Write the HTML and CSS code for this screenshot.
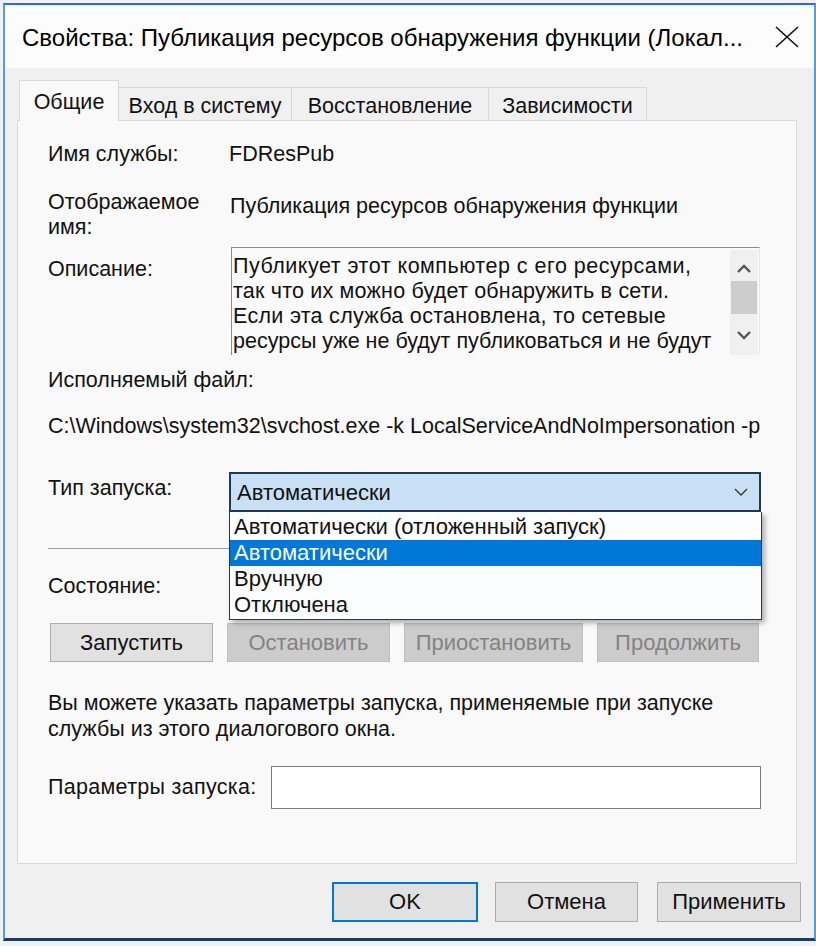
FILE: index.html
```html
<!DOCTYPE html>
<html lang="ru">
<head>
<meta charset="utf-8">
<title>Свойства</title>
<link rel="stylesheet" href="styles.css">
</head>
<body>
<div class="window">
  <div class="titlebar">
    <span class="title">Свойства: Публикация ресурсов обнаружения функции (Локал...</span>
    <svg class="close" width="24" height="22" viewBox="0 0 24 22"><path d="M1 1 L23 21 M23 1 L1 21" stroke="#111" stroke-width="1.6" fill="none"/></svg>
  </div>
  <div class="body">
    <div class="tabs">
      <div class="tab active">Общие</div>
      <div class="tab t2">Вход в систему</div>
      <div class="tab t3">Восстановление</div>
      <div class="tab t4">Зависимости</div>
    </div>
    <div class="panel">
      <div class="row r1">
        <div class="label">Имя службы:</div>
        <div class="value">FDResPub</div>
      </div>
      <div class="row r2">
        <div class="label">Отображаемое<br>имя:</div>
        <div class="value dn">Публикация ресурсов обнаружения функции</div>
      </div>
      <div class="row r3">
        <div class="label ld">Описание:</div>
        <div class="desc">
          <div class="desc-text">
            <div class="dl l1">Публикует этот компьютер с его ресурсами,</div>
            <div class="dl l2">так что их можно будет обнаружить в сети.</div>
            <div class="dl l3">Если эта служба остановлена, то сетевые</div>
            <div class="dl l4">ресурсы уже не будут публиковаться и не будут</div>
          </div>
          <div class="scroll">
            <svg class="sarrow" width="16" height="10" viewBox="0 0 16 10"><path d="M2 8 L8 2 L14 8" stroke="#555" stroke-width="2.4" fill="none"/></svg>
            <div class="thumb"></div>
            <svg class="sarrow down" width="16" height="10" viewBox="0 0 16 10"><path d="M2 2 L8 8 L14 2" stroke="#555" stroke-width="2.4" fill="none"/></svg>
          </div>
        </div>
      </div>
      <div class="line r4">Исполняемый файл:</div>
      <div class="line r5">C:\Windows\system32\svchost.exe -k LocalServiceAndNoImpersonation -p</div>
      <div class="row r6">
        <div class="label lt">Тип запуска:</div>
        <div class="combo">
          <span>Автоматически</span>
          <svg width="14" height="8" viewBox="0 0 14 8"><path d="M1 1 L7 7 L13 1" stroke="#333" stroke-width="1.3" fill="none"/></svg>
        </div>
        <div class="dropdown">
          <div class="item">Автоматически (отложенный запуск)</div>
          <div class="item sel">Автоматически</div>
          <div class="item">Вручную</div>
          <div class="item">Отключена</div>
        </div>
      </div>
      <div class="sep"></div>
      <div class="line r7">Состояние:</div>
      <div class="btnrow">
        <div class="btn b1">Запустить</div>
        <div class="btn dis b2">Остановить</div>
        <div class="btn dis b3">Приостановить</div>
        <div class="btn dis b4">Продолжить</div>
      </div>
      <div class="note">Вы можете указать параметры запуска, применяемые при запуске<br>службы из этого диалогового окна.</div>
      <div class="row params">
        <div class="plabel">Параметры запуска:</div>
        <div class="input"></div>
      </div>
    </div>
    <div class="footer">
      <div class="btn fb ok">OK</div>
      <div class="btn fb cancel">Отмена</div>
      <div class="btn fb apply">Применить</div>
    </div>
  </div>
</div>
</body>
</html>
```
FILE: styles.css
```css
html, body {
  margin: 0;
  padding: 0;
  background: #eef2f6;
}
body {
  font-family: "Liberation Sans", Arial, sans-serif;
  font-size: 21.5px;
  color: #111;
  width: 816px;
  height: 946px;
  overflow: hidden;
}
.window {
  margin: 3px 0 0 3px;
  width: 809px;
  border-top: 2px solid #2a73c0;
  border-left: 2px solid #5e9bd6;
  border-right: 2px solid #5e9bd6;
  border-bottom: 3px solid #1e3c60;
  background: #f0f0f0;
}
.titlebar {
  height: 63px;
  background: #fcfcfc;
  display: flex;
  align-items: center;
  justify-content: space-between;
  padding: 0 17px 0 17px;
}
.title {
  font-size: 24px;
  color: #000;
  white-space: nowrap;
  margin-top: 2px;
}
.close {
  margin-top: 0;
  margin-right: -2px;
}
.body {
  padding: 12px 15px 16px 12px;
}
.tabs {
  display: flex;
  align-items: flex-end;
  height: 41px;
  margin-bottom: -1px;
  padding-left: 2px;
  position: relative;
  z-index: 1;
}
.tab {
  height: 32px;
  margin-bottom: 1px;
  border: 1px solid #d9d9d9;
  border-bottom: none;
  background: #f0f0f0;
  line-height: 36px;
  margin-left: -1px;
  white-space: nowrap;
  text-align: center;
  box-sizing: content-box;
}
.tab.active {
  width: 98px;
  height: 40px;
  margin-bottom: 0;
  margin-left: 0;
  background: #f9f9f9;
  line-height: 42px;
}
.t2 { width: 172px; }
.t3 { width: 196px; }
.t4 { width: 157px; }
.panel {
  height: 721px;
  border: 1px solid #d9d9d9;
  background: #f9f9f9;
  padding: 21px 0 0 30px;
  width: 748px;
}
.row {
  display: flex;
  align-items: flex-start;
}
.label {
  width: 181px;
  line-height: 25px;
  flex: none;
}
.value {
  line-height: 25px;
  white-space: nowrap;
}
.r2 { margin-top: 23px; }
.value.dn { padding-top: 4px; padding-left: 1px; }
.r3 { margin-top: 7px; }
.label.ld { padding-top: 10px; }
.desc {
  width: 529px;
  height: 108px;
  box-sizing: border-box;
  border-top: 1px solid #8a8a8a;
  border-left: 1px solid #8a8a8a;
  border-right: 1px solid #e6e6e6;
  margin-left: 2px;
  background: #fafafa;
  display: flex;
  overflow: hidden;
}
.desc-text {
  flex: 1;
  padding: 6px 0 0 1px;
  overflow: hidden;
}
.dl {
  line-height: 25px;
  white-space: nowrap;
}
.l1 { letter-spacing: 0.5px; }
.l2 { letter-spacing: 0.2px; }
.l3 { letter-spacing: 0.3px; }
.l4 { letter-spacing: 0; }
.scroll {
  width: 28px;
  flex: none;
  margin: 2px 1px 0 0;
  background: #f0f0f0;
  display: flex;
  flex-direction: column;
  align-items: center;
}
.sarrow { margin-top: 14px; flex: none; }
.sarrow.down { margin-top: 16px; }
.thumb {
  width: 26px;
  height: 33px;
  margin-top: 7px;
  background: #cdcdcd;
}
.line {
  line-height: 25px;
  white-space: nowrap;
}
.r4 { margin-top: 13px; }
.r5 { margin-top: 21px; }
.r6 {
  margin-top: 33px;
  position: relative;
}
.label.lt { padding-top: 4px; }
.combo {
  width: 532px;
  height: 40px;
  box-sizing: border-box;
  border: 2px solid #1d3a58;
  background: #c9e0f4;
  display: flex;
  align-items: center;
  justify-content: space-between;
  padding: 2px 11px 0 6px;
  font-size: 22px;
}
.combo svg { margin-top: -2px; }
.dropdown {
  position: absolute;
  left: 181px;
  top: 40px;
  width: 533px;
  height: 108px;
  box-sizing: border-box;
  border: 1px solid #1d3a58;
  border-top: none;
  background: #fbfdff;
  box-shadow: 3px 3px 5px rgba(0,0,0,0.3);
  padding-top: 2px;
  font-size: 22px;
}
.item {
  height: 26px;
  line-height: 26px;
  padding-left: 4px;
  white-space: nowrap;
}
.item.sel {
  background: #0078d7;
  color: #fff;
}
.sep {
  margin-top: 36px;
  height: 1px;
  width: 712px;
  background: #a0a0a0;
}
.r7 { margin-top: 25px; }
.btnrow {
  display: flex;
  gap: 14px;
  margin-top: 24px;
  margin-left: 2px;
}
.btn {
  height: 39px;
  box-sizing: border-box;
  border: 1px solid #adadad;
  background: #e1e1e1;
  display: flex;
  align-items: center;
  justify-content: center;
  font-size: 22px;
  white-space: nowrap;
}
.b1, .b2 { width: 163px; }
.b3 { width: 179px; }
.b4 { width: 162px; }
.btn.dis {
  background: #cccccc;
  border-color: #bfbfbf;
  color: #838383;
}
.note {
  margin-top: 28px;
  line-height: 26px;
  white-space: nowrap;
}
.params {
  margin-top: 24px;
  align-items: center;
}
.plabel {
  width: 223px;
  flex: none;
  line-height: 25px;
  white-space: nowrap;
  letter-spacing: 0.3px;
}
.input {
  width: 490px;
  height: 43px;
  box-sizing: border-box;
  border: 1px solid #7a7a7a;
  background: #fff;
}
.footer {
  margin-top: 18px;
  display: flex;
  justify-content: flex-end;
}
.fb {
  height: 40px;
  font-size: 22px;
}
.ok {
  width: 146px;
  border: 2px solid #0078d7;
}
.cancel {
  width: 143px;
  margin-left: 17px;
}
.apply {
  width: 144px;
  margin-left: 19px;
  margin-right: -2px;
}
```
